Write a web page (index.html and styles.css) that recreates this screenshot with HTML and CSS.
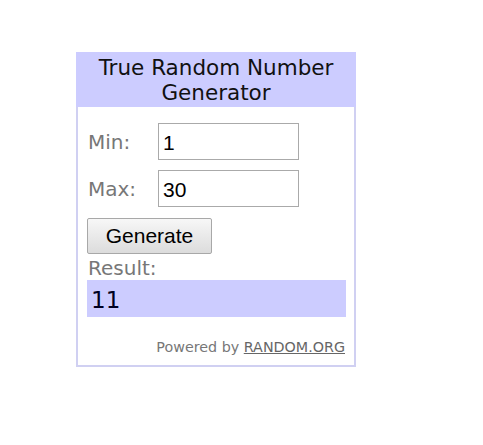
FILE: index.html
```html
<!DOCTYPE html>
<html>
<head>
<meta charset="utf-8">
<link rel="stylesheet" href="styles.css">
</head>
<body>
<div class="widget">
  <div class="header">True Random Number Generator</div>
  <div class="content">
    <div class="row">
      <span class="label">Min:</span>
      <input class="field" type="text" value="1">
    </div>
    <div class="row">
      <span class="label">Max:</span>
      <input class="field" type="text" value="30">
    </div>
    <button class="btn">Generate</button>
    <div class="result-label">Result:</div>
    <div class="result">11</div>
    <div class="powered">Powered by <a href="#">RANDOM.ORG</a></div>
  </div>
</div>
</body>
</html>
```

FILE: styles.css
```css
html, body {
  margin: 0;
  padding: 0;
  background: #ffffff;
}
body {
  padding: 52px 0 0 76px;
}
.widget {
  width: 276px;
  border: 2px solid #d0d0f2;
  background: #ffffff;
  font-family: "DejaVu Sans", Verdana, sans-serif;
}
.header {
  background: #ccccff;
  text-align: center;
  font-size: 21.5px;
  line-height: 25px;
  color: #111111;
  padding: 1px 6px 2px;
  margin: -2px -2px 0;
  border-top: 2px solid #ccccff;
}
.content {
  padding: 16px 8px 0 9px;
  display: flex;
  flex-direction: column;
}
.row {
  display: flex;
  align-items: center;
  height: 37px;
  margin-bottom: 10px;
}
.label {
  width: 70px;
  padding-left: 1px;
  font-size: 20px;
  color: #777777;
}
.field {
  box-sizing: border-box;
  width: 141px;
  height: 37px;
  margin: 0;
  border: 1px solid #aaaaaa;
  padding: 2px 4px 0;
  font-family: "Liberation Sans", Arial, sans-serif;
  font-size: 21px;
  color: #000000;
  outline: none;
}
.btn {
  align-self: flex-start;
  box-sizing: border-box;
  width: 125px;
  height: 36px;
  margin: 1px 0 0;
  padding: 0;
  border: 1px solid #a8a8a8;
  border-radius: 2px;
  background: linear-gradient(#f7f7f7, #dcdcdc);
  font-family: "Liberation Sans", Arial, sans-serif;
  font-size: 21px;
  color: #000000;
}
.result-label {
  margin-top: 3px;
  font-size: 20px;
  line-height: 23px;
  color: #777777;
  padding-left: 1px;
}
.result {
  box-sizing: border-box;
  height: 37px;
  background: #ccccff;
  font-size: 23px;
  line-height: 41px;
  color: #000022;
  padding-left: 4px;
}
.powered {
  text-align: right;
  font-size: 14.3px;
  line-height: 18px;
  color: #777777;
  padding: 21px 1px 9px 0;
}
.powered a {
  color: #666666;
  text-decoration: underline;
}
```
